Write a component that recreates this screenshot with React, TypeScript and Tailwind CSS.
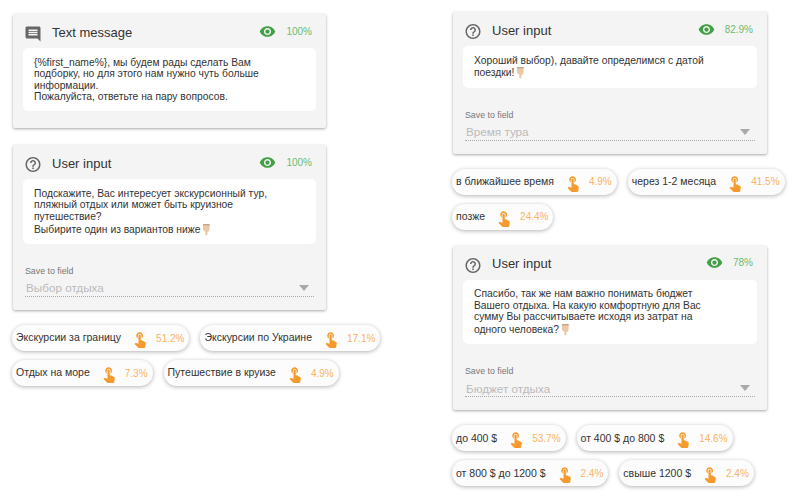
import React from "react";
import {
  MdHelpOutline,
  MdMessage,
  MdTouchApp,
  MdVisibility,
} from "react-icons/md";

interface Chip {
  label: string;
  percent: string;
}

const PointDown = () => (
  <svg
    viewBox="0 0 10 14"
    className="inline-block w-[9px] h-[13px] ml-[2px] align-[-3px]"
  >
    <path
      d="M1.5 1.2h6c.6 0 1 .4 1 1v4.6c0 1-.5 1.8-1.2 2.4l-1.3 1v2.2c0 .8-.6 1.3-1.2 1.3s-1.1-.5-1.1-1.3V9.6L2 8.4C1.3 7.8 1 7 1 6.2V1.7c0-.3.2-.5.5-.5z"
      fill="#ecc9a6"
    />
    <path d="M1 1h7.6v1.4H1z" fill="#b9a48e" />
  </svg>
);

const Eye = ({ percent }: { percent: string }) => (
  <div className="flex items-center gap-[10px]">
    <MdVisibility className="text-[17px] text-[#43a047]" />
    <span className="text-[10px] text-[#6cbb70]">{percent}</span>
  </div>
);

const CardHead = ({
  icon,
  title,
  percent,
}: {
  icon: React.ReactNode;
  title: string;
  percent: string;
}) => (
  <div className="h-[34px] flex items-center justify-between pl-[11px] pr-[14px]">
    <div className="flex items-center mt-[3px]">
      <div className="w-[18px] flex justify-center">{icon}</div>
      <span className="ml-[10px] text-[13px] text-[#333]">{title}</span>
    </div>
    <Eye percent={percent} />
  </div>
);

const Bubble = ({ children }: { children: React.ReactNode }) => (
  <div className="mx-[10px] bg-white rounded-[5px] px-[11px] py-[8.5px] text-[10.3px] leading-[11.6px] text-[#333]">
    {children}
  </div>
);

const UserInput = ({
  percent,
  field,
  children,
}: {
  percent: string;
  field: string;
  children: React.ReactNode;
}) => (
  <div className="bg-[#f4f4f4] rounded-[2px] shadow-[0_1px_3px_rgba(0,0,0,0.35)]">
    <CardHead
      icon={<MdHelpOutline className="text-[19px] text-[#666] mt-[2px]" />}
      title="User input"
      percent={percent}
    />
    <Bubble>{children}</Bubble>
    <div className="mt-[21px] mx-[12px] pb-[13px]">
      <div className="text-[8.8px] leading-[12px] text-[#777]">
        Save to field
      </div>
      <div className="mt-[3px] h-[17px] flex items-center justify-between pl-[1px] pr-[5px] border-b border-dotted border-[#aaa]">
        <span className="text-[11.7px] text-[#bbb]">{field}</span>
        <span className="w-0 h-0 border-x-[5px] border-x-transparent border-t-[6px] border-t-[#aaa]" />
      </div>
    </div>
  </div>
);

const ChipRow = ({ chips, className }: { chips: Chip[]; className: string }) => (
  <div className={`flex gap-[11px] -ml-[1px] whitespace-nowrap ${className}`}>
    {chips.map((chip) => (
      <div
        key={chip.label}
        className="h-[26px] flex items-center pl-[4px] pr-[5px] rounded-full bg-[#fcfcfc] shadow-[0_1px_4px_rgba(0,0,0,0.3)]"
      >
        <span className="text-[10.5px] text-[#333]">{chip.label}</span>
        <MdTouchApp className="text-[18px] text-[#f79a2d] mt-[2px] ml-[10px]" />
        <span className="ml-[7px] text-[10px] text-[#fbb365]">
          {chip.percent}
        </span>
      </div>
    ))}
  </div>
);

export default function App() {
  return (
    <div
      className="w-[807px] h-[500px] overflow-hidden bg-white flex"
      style={{ fontFamily: '"Liberation Sans", Arial, sans-serif' }}
    >
      <div className="w-[313px] ml-[13px] pt-[14px] shrink-0">
        <div className="bg-[#f4f4f4] rounded-[2px] shadow-[0_1px_3px_rgba(0,0,0,0.35)] pb-[17px]">
          <CardHead
            icon={
              <MdMessage className="text-[20px] text-[#666] -scale-x-100 mt-[2px]" />
            }
            title="Text message"
            percent="100%"
          />
          <Bubble>
            {"{%first_name%}"}, мы будем рады сделать Вам
            <br />
            подборку, но для этого нам нужно чуть больше
            <br />
            информации.
            <br />
            Пожалуйста, ответьте на пару вопросов.
          </Bubble>
        </div>
        <div className="mt-[17px]">
          <UserInput percent="100%" field="Выбор отдыха">
            Подскажите, Вас интересует экскурсионный тур,
            <br />
            пляжный отдых или может быть круизное
            <br />
            путешествие?
            <br />
            Выбирите один из вариантов ниже
            <PointDown />
          </UserInput>
        </div>
        <ChipRow
          className="mt-[15px]"
          chips={[
            { label: "Экскурсии за границу", percent: "51.2%" },
            { label: "Экскурсии по Украине", percent: "17.1%" },
          ]}
        />
        <ChipRow
          className="mt-[9px]"
          chips={[
            { label: "Отдых на море", percent: "7.3%" },
            { label: "Путешествие в круизе", percent: "4.9%" },
          ]}
        />
      </div>
      <div className="w-[314px] ml-[127px] pt-[12px] shrink-0">
        <UserInput percent="82.9%" field="Время тура">
          Хороший выбор), давайте определимся с датой
          <br />
          поездки!
          <PointDown />
        </UserInput>
        <ChipRow
          className="mt-[15px]"
          chips={[
            { label: "в ближайшее время", percent: "4.9%" },
            { label: "через 1-2 месяца", percent: "41.5%" },
          ]}
        />
        <ChipRow
          className="mt-[9px]"
          chips={[{ label: "позже", percent: "24.4%" }]}
        />
        <div className="mt-[16px]">
          <UserInput percent="78%" field="Бюджет отдыха">
            Спасибо, так же нам важно понимать бюджет
            <br />
            Вашего отдыха. На какую комфортную для Вас
            <br />
            сумму Вы рассчитываете исходя из затрат на
            <br />
            одного человека?
            <PointDown />
          </UserInput>
        </div>
        <ChipRow
          className="mt-[15px]"
          chips={[
            { label: "до 400 $", percent: "53.7%" },
            { label: "от 400 $ до 800 $", percent: "14.6%" },
          ]}
        />
        <ChipRow
          className="mt-[9px]"
          chips={[
            { label: "от 800 $ до 1200 $", percent: "2.4%" },
            { label: "свыше 1200 $", percent: "2.4%" },
          ]}
        />
      </div>
    </div>
  );
}
